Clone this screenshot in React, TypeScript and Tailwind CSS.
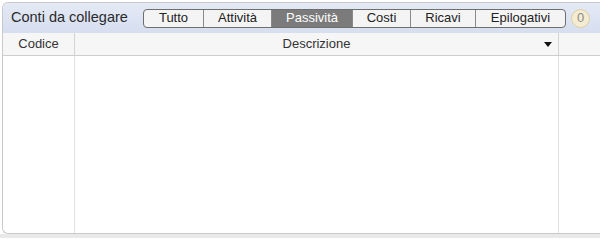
import React from 'react';

const filters = [
  { label: 'Tutto', w: 'w-[59px]' },
  { label: 'Attività', w: 'w-[68px]' },
  { label: 'Passività', w: 'w-[81px]' },
  { label: 'Costi', w: 'w-[58px]' },
  { label: 'Ricavi', w: 'w-[65px]' },
  { label: 'Epilogativi', w: 'w-[90px]' },
];

const App: React.FC = () => {
  const active = 'Passività';

  return (
    <div className="w-[600px] h-[238px] bg-white overflow-hidden font-['Liberation_Sans',Arial,sans-serif]">
      <div className="ml-[2px] mt-[2px] h-[232px] flex flex-col border border-r-0 border-[#c9c9c9] rounded-l-[6px] overflow-hidden">
        {/* header */}
        <div className="h-[30px] shrink-0 flex items-center bg-gradient-to-b from-[#e4e9f5] to-[#d6deef] pl-[8px]">
          <span className="text-[14.5px] text-[#2b2b2b] w-[132px]">Conti da collegare</span>
          <div className="flex h-[19px] border border-[#6e6e6e] rounded-[4px] overflow-hidden bg-[#f4f4f4]">
            {filters.map((f, i) => (
              <div
                key={f.label}
                className={`${f.w} flex items-center justify-center text-[13px] ${
                  i > 0 ? 'border-l border-[#8a8a8a]' : ''
                } ${f.label === active ? 'bg-[#7b7b7b] text-white' : 'text-[#222]'}`}
              >
                {f.label}
              </div>
            ))}
          </div>
          <div className="ml-[5px] w-[19px] h-[19px] rounded-full bg-[#f4ecd2] border border-[#dccf9e] flex items-center justify-center text-[13px] text-[#8a8a8a]">
            0
          </div>
        </div>
        {/* column headers */}
        <div className="h-[23px] shrink-0 flex bg-[#f6f6f6] border-b border-[#cfcfcf] text-[13px] text-[#333]">
          <div className="w-[72px] flex items-center justify-center border-r border-[#d4d4d4]">Codice</div>
          <div className="w-[484px] flex items-center justify-center relative border-r border-[#d4d4d4]">
            Descrizione
            <svg className="absolute right-[6px] top-[9px]" width="8" height="5" viewBox="0 0 8 5">
              <path d="M0 0 H8 L4 5 Z" fill="#111" />
            </svg>
          </div>
          <div className="flex-1" />
        </div>
        {/* body */}
        <div className="flex-1 flex">
          <div className="w-[72px] border-r border-[#e2e2e2]" />
          <div className="w-[484px] border-r border-[#e2e2e2]" />
          <div className="flex-1" />
        </div>
      </div>
      <div className="h-[4px] bg-[#e9e9e9]" />
    </div>
  );
};

export default App;
